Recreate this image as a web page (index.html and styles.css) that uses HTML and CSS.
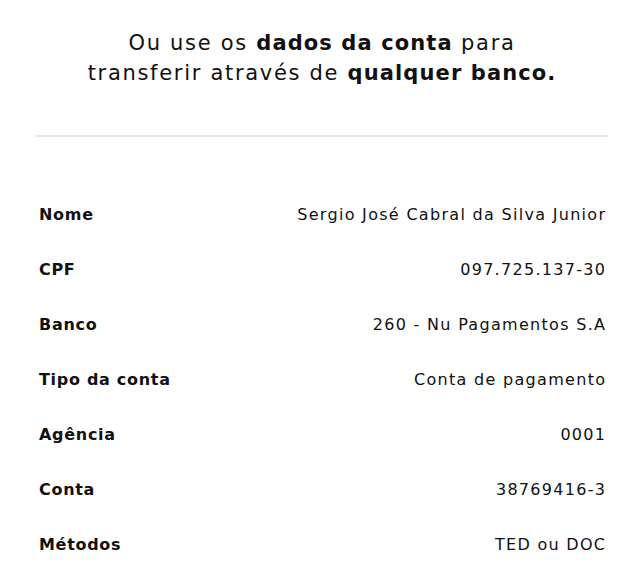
FILE: index.html
```html
<!DOCTYPE html>
<html lang="pt-BR">
<head>
<meta charset="utf-8">
<link rel="stylesheet" href="styles.css">
</head>
<body>
<main class="panel">
  <h2 class="intro">Ou use os <strong>dados da conta</strong> para<br>transferir através de <strong>qualquer banco.</strong></h2>
  <hr class="divider">
  <dl class="details">
    <div class="row"><dt>Nome</dt><dd>Sergio José Cabral da Silva Junior</dd></div>
    <div class="row"><dt>CPF</dt><dd>097.725.137-30</dd></div>
    <div class="row"><dt>Banco</dt><dd>260 - Nu Pagamentos S.A</dd></div>
    <div class="row"><dt>Tipo da conta</dt><dd>Conta de pagamento</dd></div>
    <div class="row"><dt>Agência</dt><dd>0001</dd></div>
    <div class="row"><dt>Conta</dt><dd>38769416-3</dd></div>
    <div class="row"><dt>Métodos</dt><dd>TED ou DOC</dd></div>
  </dl>
</main>
</body>
</html>
```

FILE: styles.css
```css
* { box-sizing: border-box; }
html, body { margin: 0; padding: 0; background: #fff; }
body {
  font-family: "DejaVu Sans", "Noto Sans", sans-serif;
  color: #111;
}
.panel {
  padding: 28px 36px 0;
}
.intro {
  margin: 0;
  text-align: center;
  font-size: 21px;
  font-weight: 400;
  line-height: 30px;
  letter-spacing: 1.7px;
  color: #111;
}
.intro strong { font-weight: 700; letter-spacing: 1.1px; }
.divider {
  margin: 47px 0 0;
  border: 0;
  border-top: 2px solid #e6e6e6;
  height: 0;
}
.details {
  margin: 66px 0 0;
  padding: 0 3px;
  display: flex;
  flex-direction: column;
  gap: 33px;
}
.row {
  display: flex;
  justify-content: space-between;
  align-items: center;
  height: 22px;
  font-size: 16px;
}
.row dt { font-weight: 700; letter-spacing: 0.7px; }
.row dd { margin: 0; font-weight: 400; letter-spacing: 1.3px; margin-right: -1.3px; }
```
